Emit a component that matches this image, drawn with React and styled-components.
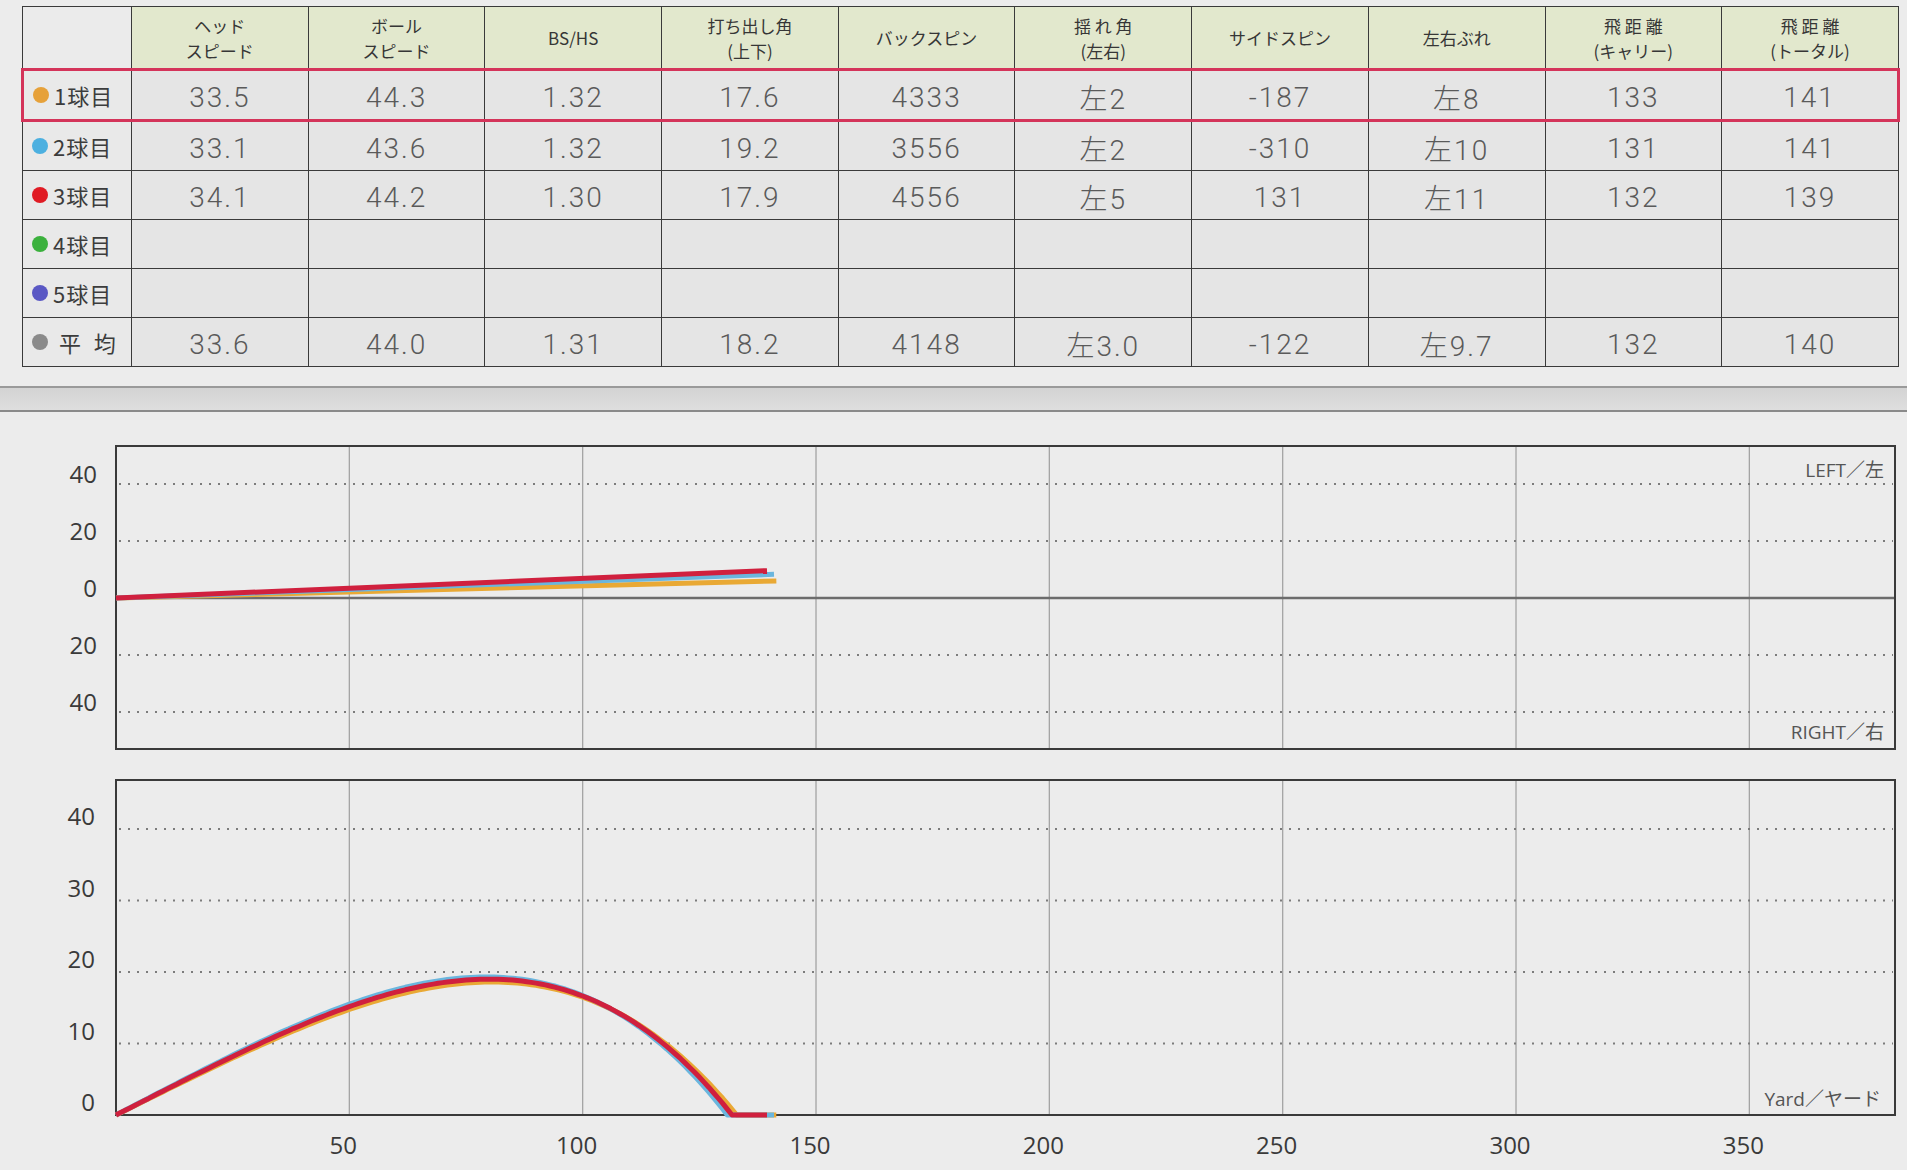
import React from "react";
import styled, { createGlobalStyle } from "styled-components";

const GlobalStyle = createGlobalStyle`
  html, body {
    margin: 0;
    padding: 0;
    background: #ececec;
  }
  body {
    font-family: "Noto Sans CJK JP", "Noto Sans", sans-serif;
  }
`;

const Page = styled.div`
  width: 1907px;
  height: 1170px;
  overflow: hidden;
  background: #ececec;
`;

const TableWrap = styled.div`
  padding: 6px 7px 0 21px;
  height: 386px;
  box-sizing: border-box;
`;

const Table = styled.table`
  width: 1879px;
  border-collapse: collapse;
  table-layout: fixed;
`;

const HeadCell = styled.th`
  height: 61px;
  padding: 0;
  background: ${({ $blank }) => ($blank ? "#ebebeb" : "#e2e8cd")};
  border: 1px solid #3a3a3a;
  font-weight: 400;
  font-size: 17px;
  line-height: 25px;
  color: #363636;
  text-align: center;
  font-family: "Noto Sans CJK JP", "Noto Sans", sans-serif;
`;

const HeadLine = styled.div`
  height: 25px;
  white-space: nowrap;
`;

const Row = styled.tr`
  ${({ $selected }) =>
    $selected &&
    `
    td {
      border-top: 3px solid #d4345a;
      border-bottom: 3px solid #d4345a;
    }
    td:first-child { border-left: 3px solid #d4345a; }
    td:last-child { border-right: 3px solid #d4345a; }
  `}
`;

const Cell = styled.td`
  height: 44px;
  padding: 4px 0 0;
  background: #e5e5e5;
  border: 1px solid #3a3a3a;
  text-align: center;
  font-family: "Roboto", "Noto Sans CJK JP", sans-serif;
  font-weight: 300;
  font-size: 28px;
  letter-spacing: 2px;
  color: #5a5a5a;
`;

const LabelCell = styled.td`
  height: 44px;
  padding: 0 0 0 9px;
  background: #e9e9e9;
  border: 1px solid #3a3a3a;
`;

const Label = styled.div`
  display: flex;
  align-items: center;
  gap: 5px;
  font-family: "Noto Sans CJK JP", "Noto Sans", sans-serif;
  font-size: 22px;
  letter-spacing: 1px;
  color: #3c3c3c;
  white-space: pre;
`;

const Dot = styled.span`
  width: 16px;
  height: 16px;
  border-radius: 50%;
  background: ${({ $color }) => $color};
  flex: none;
`;

const Band = styled.div`
  height: 22px;
  background: linear-gradient(#d3d3d3, #dedede);
  border-top: 2px solid #9a9a9a;
  border-bottom: 2px solid #8a8a8a;
`;

const ChartSvg = styled.svg`
  display: block;
  width: 1907px;
  height: ${({ $h }) => $h}px;
  font-family: "Open Sans", "Noto Sans CJK JP", sans-serif;
`;

const AxisText = styled.text`
  font-size: 24px;
  fill: #3a3a3a;
`;

const CornerText = styled.text`
  font-size: 19px;
  fill: #555;
`;

const headers = [
  ["ヘッド", "スピード"],
  ["ボール", "スピード"],
  ["BS/HS"],
  ["打ち出し角", "(上下)"],
  ["バックスピン"],
  ["揺 れ 角", "(左右)"],
  ["サイドスピン"],
  ["左右ぶれ"],
  ["飛 距 離", "(キャリー)"],
  ["飛 距 離", "(トータル)"],
];

const rows = [
  { label: "1球目", color: "#e6a13a", selected: true, values: ["33.5", "44.3", "1.32", "17.6", "4333", "左2", "-187", "左8", "133", "141"] },
  { label: "2球目", color: "#4cb0e0", values: ["33.1", "43.6", "1.32", "19.2", "3556", "左2", "-310", "左10", "131", "141"] },
  { label: "3球目", color: "#e01b24", values: ["34.1", "44.2", "1.30", "17.9", "4556", "左5", "131", "左11", "132", "139"] },
  { label: "4球目", color: "#3bb13d", values: Array(10).fill("") },
  { label: "5球目", color: "#5a58c4", values: Array(10).fill("") },
  { label: " 平  均", color: "#8a8a8a", values: ["33.6", "44.0", "1.31", "18.2", "4148", "左3.0", "-122", "左9.7", "132", "140"] },
];

const shots = [
  { color: "#e9a935", side: 6, carry: 133, total: 141.5, apex: 18.6 },
  { color: "#6ab6de", side: 8.3, carry: 131, total: 141, apex: 19.3 },
  { color: "#d0203e", side: 9.6, carry: 132, total: 139.5, apex: 19.0 },
];

const X = (yd) => 116 + yd * 4.6667;
const GRID_X = [50, 100, 150, 200, 250, 300, 350];

// simple asymmetric flight curve: steep fall after the apex
const flightPath = (shot, zero, unit) => {
  const n = 2.5;
  const xa = shot.carry * Math.pow(1 / (n + 1), 1 / n);
  const a = (shot.apex * (n + 1)) / (n * xa);
  const pts = [];
  for (let x = 0; x <= shot.carry; x += 1) {
    const y = a * x * (1 - Math.pow(x / shot.carry, n));
    pts.push(`${X(x).toFixed(1)},${(zero - y * unit).toFixed(1)}`);
  }
  pts.push(`${X(shot.carry).toFixed(1)},${zero}`);
  pts.push(`${X(shot.total).toFixed(1)},${zero}`);
  return "M" + pts.join(" L");
};

function LateralChart() {
  const zero = 186;
  const u = 2.85;
  const top = 34;
  const bottom = 337;
  const ticks = [40, 20, 0, -20, -40];
  return (
    <ChartSvg $h={351} viewBox="0 0 1907 351">
      {GRID_X.map((v) => (
        <line key={v} x1={X(v)} x2={X(v)} y1={top} y2={bottom} stroke="#a4a4a4" strokeWidth="1.3" />
      ))}
      {ticks
        .filter((t) => t !== 0)
        .map((t) => (
          <line key={t} x1={119} x2={1893} y1={zero - t * u} y2={zero - t * u} stroke="#7c7c7c" strokeWidth="2" strokeDasharray="2 7" />
        ))}
      <line x1={116} x2={1895} y1={zero} y2={zero} stroke="#6c6c6c" strokeWidth="2.5" />
      <rect x={116} y={top} width={1779} height={bottom - top} fill="none" stroke="#3a3a3a" strokeWidth="2" />
      {ticks.map((t) => (
        <AxisText key={t} x={97} y={zero - t * u - 1} textAnchor="end">
          {Math.abs(t)}
        </AxisText>
      ))}
      <CornerText x={1884} y={65} textAnchor="end">LEFT／左</CornerText>
      <CornerText x={1884} y={327} textAnchor="end">RIGHT／右</CornerText>
      {shots.map((s) => (
        <line key={s.color} x1={X(0)} y1={zero} x2={X(s.total)} y2={zero - s.side * u} stroke={s.color} strokeWidth="5" />
      ))}
    </ChartSvg>
  );
}

function HeightChart() {
  const zero = 352;
  const u = 7.15;
  const ticks = [40, 30, 20, 10, 0];
  return (
    <ChartSvg $h={403} viewBox="0 0 1907 403">
      {GRID_X.map((v) => (
        <line key={v} x1={X(v)} x2={X(v)} y1={17} y2={zero} stroke="#a4a4a4" strokeWidth="1.3" />
      ))}
      {ticks
        .filter((t) => t !== 0)
        .map((t) => (
          <line key={t} x1={119} x2={1893} y1={zero - t * u} y2={zero - t * u} stroke="#7c7c7c" strokeWidth="2" strokeDasharray="2 7" />
        ))}
      <rect x={116} y={17} width={1779} height={zero - 17} fill="none" stroke="#3a3a3a" strokeWidth="2" />
      {ticks.map((t) => (
        <AxisText key={t} x={95} y={zero - t * u - 4} textAnchor="end">
          {t}
        </AxisText>
      ))}
      {GRID_X.map((v) => (
        <AxisText key={v} x={X(v) - 6} y={391} textAnchor="middle">
          {v}
        </AxisText>
      ))}
      <CornerText x={1881} y={343} textAnchor="end">Yard／ヤード</CornerText>
      {shots.map((s) => (
        <path key={s.color} d={flightPath(s, zero, u)} fill="none" stroke={s.color} strokeWidth="5" strokeLinejoin="round" />
      ))}
    </ChartSvg>
  );
}

export default function App() {
  return (
    <Page>
      <GlobalStyle />
      <TableWrap>
        <Table>
          <colgroup>
            <col style={{ width: 109 }} />
            {headers.map((_, i) => (
              <col key={i} />
            ))}
          </colgroup>
          <thead>
            <tr>
              <HeadCell $blank />
              {headers.map((h, i) => (
                <HeadCell key={i}>
                  {h.map((line, j) => (
                    <HeadLine key={j}>{line}</HeadLine>
                  ))}
                </HeadCell>
              ))}
            </tr>
          </thead>
          <tbody>
            {rows.map((r) => (
              <Row key={r.label} $selected={r.selected}>
                <LabelCell>
                  <Label>
                    <Dot $color={r.color} />
                    {r.label}
                  </Label>
                </LabelCell>
                {r.values.map((v, i) => (
                  <Cell key={i}>{v}</Cell>
                ))}
              </Row>
            ))}
          </tbody>
        </Table>
      </TableWrap>
      <Band />
      <LateralChart />
      <HeightChart />
    </Page>
  );
}
